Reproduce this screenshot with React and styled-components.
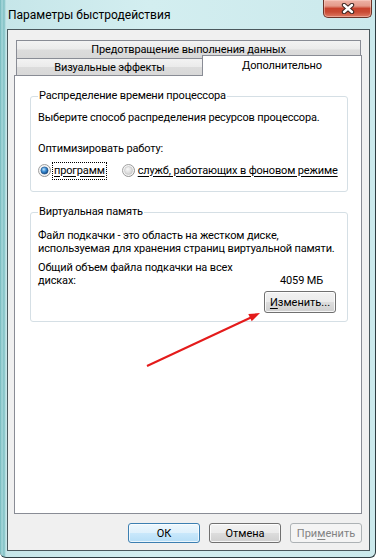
import React from 'react';
import styled, { createGlobalStyle, css } from 'styled-components';

const GlobalStyle = createGlobalStyle`
  html, body { margin: 0; padding: 0; background: #fff; }
  body {
    font-family: Roboto, "Noto Sans", sans-serif;
    font-size: 11px;
    line-height: 13px;
    letter-spacing: -0.15px;
    color: #000;
  }
`;

const Window = styled.div`
  position: relative;
  box-sizing: border-box;
  width: 376px;
  height: 558px;
  display: flex;
  flex-direction: column;
  padding: 0 5px 6px 7px;
  background: linear-gradient(90deg, #6fb6ba 0px, #a9d8dc 2px, #7fc0c4 4px, #c6e6e9 6px, #d3eef0 40%, #cbe9ec 100%);
  border-right: 1px solid #2e3d42;
  border-bottom: 1px solid #2e3d42;
  border-bottom-left-radius: 6px;
  border-bottom-right-radius: 6px;
`;

const TitleBar = styled.div`
  height: 29px;
  display: flex;
  align-items: flex-start;
  justify-content: space-between;
`;

const Title = styled.div`
  margin: 8px 0 0 1px;
  font-size: 12px;
  line-height: 14px;
  letter-spacing: 0;
  color: #000;
`;

const CloseButton = styled.div`
  width: 49px;
  height: 18px;
  margin-right: -2px;
  box-sizing: border-box;
  border: 1px solid #6b3328;
  border-top: none;
  border-radius: 0 0 5px 5px;
  background: linear-gradient(#eeb3a6 0%, #e49a8a 35%, #c8432d 50%, #c94a33 70%, #de7a63 100%);
  box-shadow: inset 0 0 0 1px rgba(255, 220, 210, 0.45);
  display: flex;
  align-items: center;
  justify-content: center;
`;

const Client = styled.div`
  flex: 1;
  display: flex;
  flex-direction: column;
  border: 1px solid #4a585d;
  background: #f0f0f0;
  padding: 10px 7px 7px 6px;
`;

const Tabs = styled.div`
  margin-left: 2px;
`;

const tabBase = css`
  box-sizing: border-box;
  display: flex;
  align-items: center;
  justify-content: center;
  border: 1px solid #898c95;
  border-bottom: none;
  white-space: nowrap;
`;

const BackTab = styled.div`
  ${tabBase}
  width: ${p => p.$w}px;
  height: ${p => p.$h}px;
  background: linear-gradient(#f3f3f3 0%, #ebebeb 48%, #dcdcdc 52%, #d8d8d8 100%);
  ${p => p.$noRight && css`border-right: none;`}
`;

const TabRow = styled.div`
  display: flex;
  align-items: flex-start;
  height: ${p => p.$h || 17}px;
`;

const ActiveTab = styled.div`
  ${tabBase}
  position: relative;
  z-index: 1;
  width: 160px;
  height: 21px;
  margin-top: -3px;
  padding-bottom: 1px;
  background: #fff;
`;

const Panel = styled.div`
  flex: 1;
  border: 1px solid #898c95;
  background: #fff;
  padding: 13px 13px 0 15px;
`;

const Group = styled.fieldset`
  margin: 0 0 ${p => p.$gap || 0}px 0;
  padding: ${p => p.$pt}px 7px ${p => p.$pb}px 7px;
  border: 1px solid #d5dfe5;
  border-radius: 3px;
  min-width: 0;
`;

const Legend = styled.legend`
  margin-left: 0;
  padding: 0 1px;
  line-height: 14px;
`;

const Line = styled.div`
  margin-top: ${p => p.$mt || 0}px;
  white-space: nowrap;
`;

const RadioRow = styled.div`
  display: flex;
  align-items: center;
  margin-top: ${p => p.$mt || 0}px;
  height: 17px;
`;

const RadioOption = styled.label`
  display: flex;
  align-items: center;
  margin-right: ${p => p.$mr || 0}px;
  white-space: nowrap;
`;

const RadioLabel = styled.span`
  margin-left: 2px;
  padding: 1px 1px 2px 1px;
  line-height: 13px;
  text-decoration: underline;
  text-underline-offset: 2px;
  ${p => p.$focus && css`outline: 1px dotted #000;`}
`;

const TotalRow = styled.div`
  display: flex;
  align-items: flex-end;
  justify-content: space-between;
  margin-top: ${p => p.$mt || 0}px;
  padding-right: 17px;
`;

const TotalLabel = styled.div`
  width: 205px;
`;

const ButtonRight = styled.div`
  display: flex;
  justify-content: flex-end;
  margin-top: ${p => p.$mt || 0}px;
  margin-right: 4px;
`;

const Button = styled.button`
  box-sizing: border-box;
  width: 72px;
  height: ${p => p.$h || 20}px;
  padding: 0;
  font: inherit;
  color: #000;
  border: 1px solid #707070;
  border-radius: 3px;
  background: linear-gradient(#f2f2f2 0%, #ebebeb 49%, #dddddd 51%, #cfcfcf 100%);
  box-shadow: inset 0 0 0 1px rgba(255, 255, 255, 0.8);
  ${p => p.$default && css`
    border-color: #3c7fb1;
    background: linear-gradient(#edf7fd 0%, #dff1fc 49%, #c9e8fb 51%, #b6def7 100%);
    box-shadow: inset 0 0 0 1px rgba(255, 255, 255, 0.7);
  `}
  ${p => p.disabled && css`
    color: #838383;
    border-color: #adb2b5;
    background: #f4f4f4;
    box-shadow: none;
  `}
`;

const U = styled.span`
  text-decoration: underline;
  text-underline-offset: 2px;
`;

const ButtonBar = styled.div`
  display: flex;
  justify-content: flex-end;
  gap: 9px;
  margin-top: 9px;
`;

const Arrow = styled.svg`
  position: absolute;
  left: 0;
  top: 0;
  pointer-events: none;
`;

const Radio = ({ checked }) => (
  <svg width="13" height="13" viewBox="0 0 13 13">
    <defs>
      <linearGradient id="rring" x1="0" y1="0" x2="1" y2="1">
        <stop offset="0" stopColor="#a7a7a7" />
        <stop offset="1" stopColor="#8a8a8a" />
      </linearGradient>
      <radialGradient id="rgray" cx="0.4" cy="0.35" r="0.7">
        <stop offset="0" stopColor="#f8f8f8" />
        <stop offset="1" stopColor="#cfcfcf" />
      </radialGradient>
      <radialGradient id="rblue" cx="0.4" cy="0.35" r="0.7">
        <stop offset="0" stopColor="#c4e4fb" />
        <stop offset="0.45" stopColor="#3c8fd6" />
        <stop offset="1" stopColor="#0d3f7a" />
      </radialGradient>
    </defs>
    <circle cx="6.5" cy="6.5" r="6" fill="#f4f4f4" stroke="url(#rring)" />
    {checked
      ? <circle cx="6.5" cy="6.5" r="3.6" fill="url(#rblue)" stroke="#1b4c80" strokeWidth="0.6" />
      : <circle cx="6.5" cy="6.5" r="4" fill="url(#rgray)" stroke="#c2c2c2" strokeWidth="0.6" />}
  </svg>
);

export default function App() {
  return (
    <>
      <GlobalStyle />
      <Window>
        <TitleBar>
          <Title>Параметры быстродействия</Title>
          <CloseButton>
            <svg width="14" height="11" viewBox="0 0 14 11">
              <path d="M3 2 L11 9 M11 2 L3 9" stroke="#3a2420" strokeWidth="4.4" strokeLinecap="round" />
              <path d="M3 2 L11 9 M11 2 L3 9" stroke="#fff" strokeWidth="2.4" strokeLinecap="round" />
            </svg>
          </CloseButton>
        </TitleBar>
        <Client>
          <Tabs>
            <TabRow $h={18}>
              <BackTab $w={345} $h={18}>Предотвращение выполнения данных</BackTab>
            </TabRow>
            <TabRow>
              <BackTab $w={186} $h={17} $noRight>Визуальные эффекты</BackTab>
              <ActiveTab>Дополнительно</ActiveTab>
            </TabRow>
          </Tabs>
          <Panel>
            <Group $pt={8} $pb={12} $gap={13}>
              <Legend>Распределение времени процессора</Legend>
              <Line>Выберите способ распределения ресурсов процессора.</Line>
              <Line $mt={18}>Оптимизировать работу:</Line>
              <RadioRow $mt={7}>
                <RadioOption $mr={16}>
                  <Radio checked />
                  <RadioLabel $focus>программ</RadioLabel>
                </RadioOption>
                <RadioOption>
                  <Radio />
                  <RadioLabel>служб, работающих в фоновом режиме</RadioLabel>
                </RadioOption>
              </RadioRow>
            </Group>
            <Group $pt={10} $pb={8}>
              <Legend>Виртуальная память</Legend>
              <Line>Файл подкачки - это область на жестком диске,</Line>
              <Line>используемая для хранения страниц виртуальной памяти.</Line>
              <TotalRow $mt={6}>
                <TotalLabel>Общий объем файла подкачки на всех дисках:</TotalLabel>
                <div>4059 МБ</div>
              </TotalRow>
              <ButtonRight $mt={4}>
                <Button $h={22}><U>И</U>зменить...</Button>
              </ButtonRight>
            </Group>
          </Panel>
          <ButtonBar>
            <Button $default>ОК</Button>
            <Button>Отмена</Button>
            <Button disabled>При<U>м</U>енить</Button>
          </ButtonBar>
        </Client>
        <Arrow width="376" height="558" viewBox="0 0 376 558">
          <line x1="147" y1="366" x2="252" y2="317" stroke="#e41b1b" strokeWidth="2" />
          <polygon points="260,313 251.7,321.3 248.3,314.1" fill="#e41b1b" />
        </Arrow>
      </Window>
    </>
  );
}
